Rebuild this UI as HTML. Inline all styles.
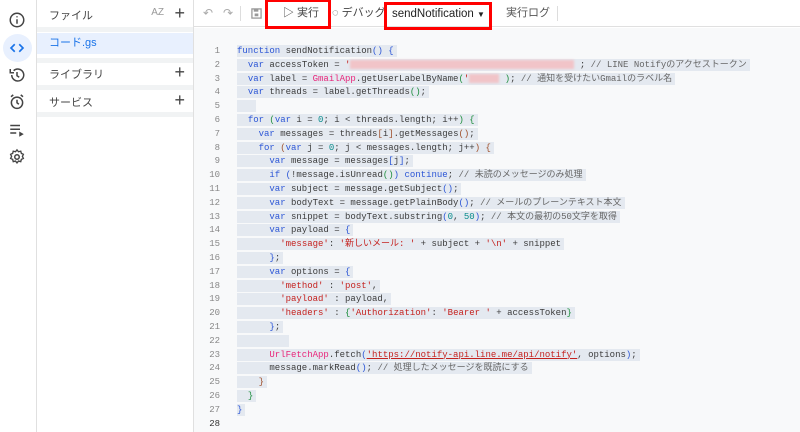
<!DOCTYPE html>
<html><head><meta charset="utf-8">
<style>
*{margin:0;padding:0;box-sizing:border-box}
body{width:800px;height:432px;overflow:hidden;background:#fff;font-family:"Liberation Sans","Noto Sans CJK JP",sans-serif;position:relative;color:#3c4043}
.rail{position:absolute;left:0;top:0;width:37px;height:432px;background:#fff;border-right:1px solid #e0e0e0}
.rail svg{position:absolute;left:8px}
.sel{position:absolute;left:3px;top:34px;width:29px;height:28px;border-radius:50%;background:#e8f0fe}
.panel{position:absolute;left:37px;top:0;width:157px;height:432px;background:#fff;border-right:1px solid #e0e0e0}
.panel .row{position:absolute;left:0;width:156px;font-size:11px;color:#444;padding-left:12px}
.plus{position:absolute;right:8px;font-size:18px;color:#444;font-weight:300;line-height:1}
.sep{position:absolute;left:0;width:156px;height:5px;background:#f1f3f4}
.toolbar{position:absolute;left:194px;top:0;width:606px;height:27px;border-bottom:1px solid #e0e0e0;background:#fff;font-size:11px;color:#5f6368}
.toolbar span{line-height:27px}
.editor{position:absolute;left:194px;top:28px;width:606px;height:404px;background:#f8f9fa}
.code{position:absolute;left:194px;top:45px;font-family:"Liberation Mono","Noto Sans CJK JP",monospace;font-size:9px;line-height:13.8px;white-space:normal;color:#3c3c3c}
.ln{display:block;height:13.8px;white-space:pre}
.n{display:inline-block;width:26px;text-align:right;color:#888;margin-right:17px}
.h{background:#e4e9f0;padding:1px 3px 1px 0}
.k{color:#2c56d6}.s{color:#c5221f}.m{color:#098c8c}.g{color:#e8267a}.c{color:#666}.p1{color:#1e8e3e}.p2{color:#a0522d}.b{color:#2c56d6}
.red{position:absolute;border:3px solid #f00}
.blur{display:inline-block;background:#f1c4c8;height:9px;vertical-align:middle;filter:blur(1px)}
</style></head><body>
<div class="rail">
<svg style="top:11px" width="18" height="18" viewBox="0 0 24 24"><circle cx="12" cy="12" r="9" fill="none" stroke="#444" stroke-width="2"/><path d="M12 11v6M12 7v1.5" stroke="#444" stroke-width="2"/></svg>
<div class="sel"></div>
<svg style="top:39px" width="18" height="18" viewBox="0 0 24 24"><path d="M9 7l-5 5 5 5M15 7l5 5-5 5" fill="none" stroke="#1a73e8" stroke-width="2.2"/></svg>
<svg style="top:66px" width="18" height="18" viewBox="0 0 24 24"><path d="M5 12a8 8 0 1 0 2.5-5.8M3 4v5h5" fill="none" stroke="#444" stroke-width="2"/><path d="M12 8v5l3 2" fill="none" stroke="#444" stroke-width="2"/></svg>
<svg style="top:93px" width="18" height="18" viewBox="0 0 24 24"><circle cx="12" cy="13" r="7.5" fill="none" stroke="#444" stroke-width="2"/><path d="M12 9v4l2.5 2M4 5l3-2.5M20 5l-3-2.5" fill="none" stroke="#444" stroke-width="2"/></svg>
<svg style="top:121px" width="18" height="18" viewBox="0 0 24 24"><path d="M3 6h13M3 11h13M3 16h8" stroke="#444" stroke-width="2"/><path d="M15 14l6 3.5-6 3.5z" fill="#444"/></svg>
<svg style="top:148px" width="18" height="18" viewBox="0 0 24 24"><circle cx="12" cy="12" r="3" fill="none" stroke="#444" stroke-width="2"/><path d="M12 2.5l2 2.5 3-.8.8 3 2.7 1.3-1.3 2.7 1.3 2.7-2.7 1.3-.8 3-3-.8-2 2.5-2-2.5-3 .8-.8-3-2.7-1.3 1.3-2.7-1.3-2.7 2.7-1.3.8-3 3 .8z" fill="none" stroke="#444" stroke-width="1.8"/></svg>
</div>
<div class="panel">
<div class="row" style="top:7px">ファイル<span style="position:absolute;right:29px;top:0;color:#999;font-size:10px">AZ</span><span class="plus" style="top:-3px">+</span></div>
<div class="sep" style="top:27px"></div>
<div class="row" style="top:33px;height:21px;background:#e8f0fe;color:#1a73e8;line-height:21px">コード.gs</div>
<div class="sep" style="top:58px"></div>
<div class="row" style="top:66px">ライブラリ<span class="plus" style="top:-3px">+</span></div>
<div class="sep" style="top:85px"></div>
<div class="row" style="top:94px">サービス<span class="plus" style="top:-3px">+</span></div>
<div class="sep" style="top:112px"></div>
</div>
<div class="toolbar">
<span style="position:absolute;left:9px;top:0;color:#aaa;font-size:12px">↶</span>
<span style="position:absolute;left:29px;top:0;color:#aaa;font-size:12px">↷</span>
<span style="position:absolute;left:46px;top:6px;width:1px;height:15px;background:#ddd"></span>
<svg style="position:absolute;left:57px;top:8px" width="11" height="11" viewBox="0 0 12 12"><rect x="1" y="1" width="10" height="10" fill="none" stroke="#999" stroke-width="1.4"/><rect x="4" y="6" width="4" height="3" fill="#999"/><rect x="3" y="1" width="5" height="3" fill="#999"/></svg>
<span style="position:absolute;left:89px;top:0;color:#444">▷ 実行</span>
<span style="position:absolute;left:138px;top:0;color:#444">◌ デバッグ</span>
<span style="position:absolute;left:198px;top:1px;color:#222;font-size:11.5px">sendNotification <span style="font-size:8px;line-height:27px">▼</span></span>
<span style="position:absolute;left:312px;top:0;color:#555">実行ログ</span>
<span style="position:absolute;left:363px;top:6px;width:1px;height:15px;background:#ddd"></span>
</div>
<div class="editor"></div>
<div class="code">
<span class="ln"><span class="n">1</span><span class="h"><span class="k">function</span> sendNotification<span class="b">()</span> <span class="b">{</span></span></span>
<span class="ln"><span class="n">2</span><span class="h">  <span class="k">var</span> accessToken = <span class="s">'</span><span class="blur" style="width:224px"></span> ; <span class="c">// LINE Notifyのアクセストークン</span></span></span>
<span class="ln"><span class="n">3</span><span class="h">  <span class="k">var</span> label = <span class="g">GmailApp</span>.getUserLabelByName<span class="p1">(</span><span class="s">'</span><span class="blur" style="width:30px"></span> <span class="p1">)</span>; <span class="c">// 通知を受けたいGmailのラベル名</span></span></span>
<span class="ln"><span class="n">4</span><span class="h">  <span class="k">var</span> threads = label.getThreads<span class="p1">()</span>;</span></span>
<span class="ln"><span class="n">5</span><span class="h">   </span></span>
<span class="ln"><span class="n">6</span><span class="h">  <span class="k">for</span> <span class="p1">(</span><span class="k">var</span> i = <span class="m">0</span>; i &lt; threads.length; i++<span class="p1">)</span> <span class="p1">{</span></span></span>
<span class="ln"><span class="n">7</span><span class="h">    <span class="k">var</span> messages = threads<span class="p2">[</span>i<span class="p2">]</span>.getMessages<span class="p2">()</span>;</span></span>
<span class="ln"><span class="n">8</span><span class="h">    <span class="k">for</span> <span class="p2">(</span><span class="k">var</span> j = <span class="m">0</span>; j &lt; messages.length; j++<span class="p2">)</span> <span class="p2">{</span></span></span>
<span class="ln"><span class="n">9</span><span class="h">      <span class="k">var</span> message = messages<span class="b">[</span>j<span class="b">]</span>;</span></span>
<span class="ln"><span class="n">10</span><span class="h">      <span class="k">if</span> <span class="b">(</span>!message.isUnread<span class="p1">()</span><span class="b">)</span> <span class="k">continue</span>; <span class="c">// 未読のメッセージのみ処理</span></span></span>
<span class="ln"><span class="n">11</span><span class="h">      <span class="k">var</span> subject = message.getSubject<span class="b">()</span>;</span></span>
<span class="ln"><span class="n">12</span><span class="h">      <span class="k">var</span> bodyText = message.getPlainBody<span class="b">()</span>; <span class="c">// メールのプレーンテキスト本文</span></span></span>
<span class="ln"><span class="n">13</span><span class="h">      <span class="k">var</span> snippet = bodyText.substring<span class="b">(</span><span class="m">0</span>, <span class="m">50</span><span class="b">)</span>; <span class="c">// 本文の最初の50文字を取得</span></span></span>
<span class="ln"><span class="n">14</span><span class="h">      <span class="k">var</span> payload = <span class="b">{</span></span></span>
<span class="ln"><span class="n">15</span><span class="h">        <span class="s">'message'</span>: <span class="s">'新しいメール: '</span> + subject + <span class="s">'\n'</span> + snippet</span></span>
<span class="ln"><span class="n">16</span><span class="h">      <span class="b">}</span>;</span></span>
<span class="ln"><span class="n">17</span><span class="h">      <span class="k">var</span> options = <span class="b">{</span></span></span>
<span class="ln"><span class="n">18</span><span class="h">        <span class="s">'method'</span> : <span class="s">'post'</span>,</span></span>
<span class="ln"><span class="n">19</span><span class="h">        <span class="s">'payload'</span> : payload,</span></span>
<span class="ln"><span class="n">20</span><span class="h">        <span class="s">'headers'</span> : <span class="p1">{</span><span class="s">'Authorization'</span>: <span class="s">'Bearer '</span> + accessToken<span class="p1">}</span></span></span>
<span class="ln"><span class="n">21</span><span class="h">      <span class="b">}</span>;</span></span>
<span class="ln"><span class="n">22</span><span class="h">         </span></span>
<span class="ln"><span class="n">23</span><span class="h">      <span class="g">UrlFetchApp</span>.fetch<span class="b">(</span><span class="s" style="text-decoration:underline">'https://notify-api.line.me/api/notify'</span>, options<span class="b">)</span>;</span></span>
<span class="ln"><span class="n">24</span><span class="h">      message.markRead<span class="b">()</span>; <span class="c">// 処理したメッセージを既読にする</span></span></span>
<span class="ln"><span class="n">25</span><span class="h">    <span class="p2">}</span></span></span>
<span class="ln"><span class="n">26</span><span class="h">  <span class="p1">}</span></span></span>
<span class="ln"><span class="n">27</span><span class="h"><span class="b">}</span></span></span>
<span class="ln"><span class="n" style="color:#333">28</span></span>
</div>
<div class="red" style="left:265px;top:-1px;width:66px;height:30px"></div>
<div class="red" style="left:384px;top:2px;width:108px;height:28px"></div>
</body></html>
